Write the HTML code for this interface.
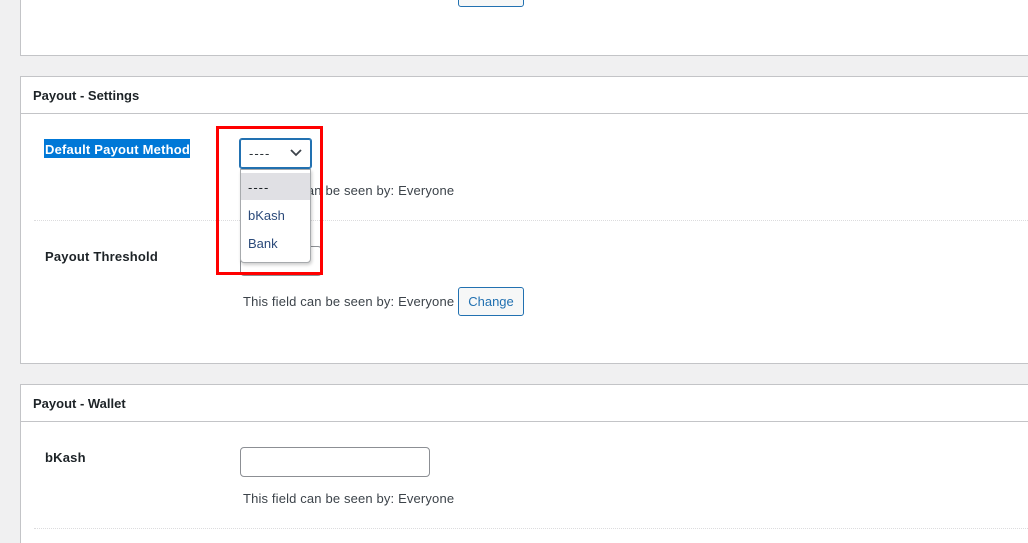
<!DOCTYPE html>
<html style="height:543px;overflow:hidden"><head><style>
body{margin:0;width:1028px;height:543px;background:#f0f0f1;position:relative;overflow:hidden;font-family:"Liberation Sans",sans-serif;font-size:13px;color:#3c434a}
.a{position:absolute}
.panel{position:absolute;left:20px;width:1008px;background:#fff;border:1px solid #c3c4c7;border-right:none}
.hd{position:absolute;left:0;right:0;border-bottom:1px solid #c3c4c7}
.h{position:absolute;left:12px;font-weight:bold;color:#1d2327;font-size:13px}
.lbl{position:absolute;font-weight:bold;color:#1d2327;font-size:13px;letter-spacing:0.2px}
.note{position:absolute;left:243px;color:#3c434a;font-size:13px;white-space:nowrap;letter-spacing:0.15px}
.btn{position:absolute;left:458px;width:64px;height:27px;border:1px solid #2271b1;border-radius:3px;background:#f6f7f7;color:#2271b1;text-align:center;line-height:27px;font-size:13px}
.dot{position:absolute;left:34px;width:994px;border-top:1px dotted #dcdcde}
</style></head><body>
<div class="panel" style="top:0;height:55px;border-top:none"></div>
<div class="btn" style="top:-22px"></div>

<div class="panel" style="top:76px;height:286px"></div>
<div class="hd" style="top:113px;left:21px"></div>
<div class="a h" style="left:33px;top:88px">Payout - Settings</div>
<div class="a" style="left:44px;top:139px;width:146px;height:19px;background:#0078d7"></div>
<div class="lbl" style="left:45px;top:142px;color:#fff">Default Payout Method</div>
<div class="note" style="top:183px">This field can be seen by: Everyone</div>
<div class="dot" style="top:220px"></div>
<div class="lbl" style="left:45px;top:249px">Payout Threshold</div>
<div class="a" style="left:240px;top:246px;width:80px;height:28px;border:1px solid #8c8f94;border-radius:4px;background:#fff"></div>
<div class="note" style="top:294px">This field can be seen by: Everyone</div>
<div class="btn" style="top:287px">Change</div>

<div class="a" style="left:239px;top:138px;width:71px;height:29px;border:1px solid #2271b1;border-radius:3px;background:#fff;box-shadow:0 0 0 1px #2271b1 inset"></div>
<div class="a" style="left:249px;top:146px;color:#2c3338;letter-spacing:1px">----</div>
<svg class="a" style="left:290px;top:148px" width="12" height="10"><path d="M1 2 L6 7 L11 2" stroke="#3c434a" stroke-width="1.8" fill="none"/></svg>
<div class="a" style="left:240px;top:169px;width:69px;height:92px;border:1px solid #a7aaad;border-radius:0 0 4px 4px;background:#fff;box-shadow:1px 2px 3px rgba(0,0,0,.2)"></div>
<div class="a" style="left:241px;top:173px;width:69px;height:27px;background:#e0e0e4"></div>
<div class="a" style="left:248px;top:180px;color:#1d2327;letter-spacing:1px">----</div>
<div class="a" style="left:248px;top:208px;color:#2b4a7a">bKash</div>
<div class="a" style="left:248px;top:236px;color:#2b4a7a">Bank</div>
<div class="a" style="left:216px;top:126px;width:101px;height:143px;border:3px solid #f00"></div>

<div class="panel" style="top:384px;height:158px;border-bottom:none"></div>
<div class="hd" style="top:421px;left:21px"></div>
<div class="a h" style="left:33px;top:396px">Payout - Wallet</div>
<div class="lbl" style="left:45px;top:450px">bKash</div>
<div class="a" style="left:240px;top:447px;width:188px;height:28px;border:1px solid #8c8f94;border-radius:4px;background:#fff"></div>
<div class="note" style="top:491px">This field can be seen by: Everyone</div>
<div class="dot" style="top:528px"></div>
</body></html>
